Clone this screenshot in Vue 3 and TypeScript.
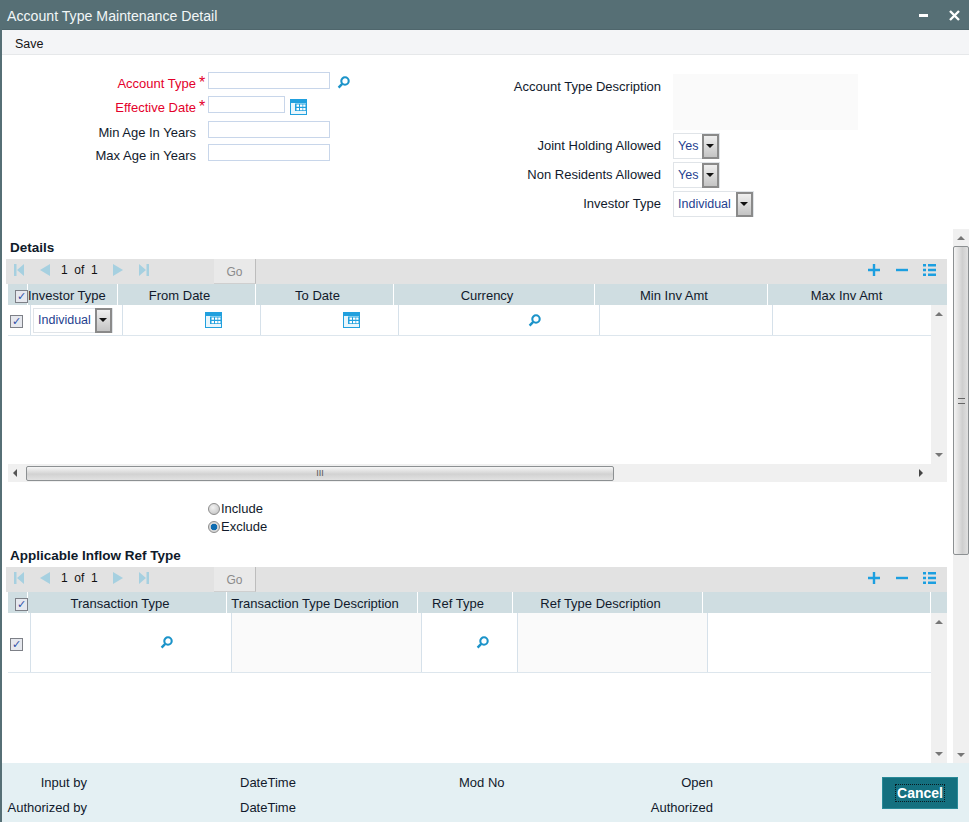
<script setup lang="ts">
interface Cell { w: number; bg?: boolean; icon?: 'cal' | 'search'; pad?: number; select?: boolean; check?: boolean }
interface Head { w: number; label: string; check?: boolean; left?: boolean; pr?: number }

const heads1: Head[] = [
  { w: 20, label: '', check: true },
  { w: 90, label: 'Investor Type', left: true },
  { w: 138, label: 'From Date' },
  { w: 138, label: 'To Date' },
  { w: 201, label: 'Currency' },
  { w: 173, label: 'Min Inv Amt' },
  { w: 180, label: 'Max Inv Amt', pr: 23 }
]
const cells1: Cell[] = [
  { w: 23, check: true },
  { w: 92, select: true },
  { w: 138, icon: 'cal', pad: 82 },
  { w: 138, icon: 'cal', pad: 82 },
  { w: 201, icon: 'search', pad: 129 },
  { w: 173 },
  { w: 158 }
]
const heads2: Head[] = [
  { w: 20, label: '', check: true },
  { w: 199, label: 'Transaction Type' },
  { w: 191, label: 'Transaction Type Description' },
  { w: 95, label: 'Ref Type' },
  { w: 190, label: 'Ref Type Description' },
  { w: 228, label: '' },
  { w: 17, label: '' }
]
const cells2: Cell[] = [
  { w: 23, check: true },
  { w: 201, icon: 'search', pad: 129 },
  { w: 190, bg: true },
  { w: 96, icon: 'search', pad: 54 },
  { w: 190, bg: true },
  { w: 223 }
]
const leftFields = [
  { label: 'Account Type', req: true, w: 122, icon: 'search' },
  { label: 'Effective Date', req: true, w: 77, icon: 'cal' },
  { label: 'Min Age In Years', req: false, w: 122, icon: '' },
  { label: 'Max Age in Years', req: false, w: 122, icon: '' }
]
const rightSelects = [
  { label: 'Joint Holding Allowed', value: 'Yes', w: 47 },
  { label: 'Non Residents Allowed', value: 'Yes', w: 47 },
  { label: 'Investor Type', value: 'Individual', w: 81 }
]
const grids = [
  { title: 'Details', heads: heads1, cells: cells1, rowH: 31, bodyH: 159, hscroll: true },
  { title: 'Applicable Inflow Ref Type', heads: heads2, cells: cells2, rowH: 60, bodyH: 150, hscroll: false }
]
</script>

<template>
  <div class="window">
    <svg class="defs" aria-hidden="true">
      <symbol id="i-search" viewBox="0 0 13 13">
        <circle cx="8" cy="5" r="3.7" fill="none" stroke="#1b93c9" stroke-width="2.100" />
        <path d="M5.200 7.900 1.600 11.600" fill="none" stroke="#1b93c9" stroke-width="2.400" />
      </symbol>
      <symbol id="i-cal" viewBox="0 0 17 16">
        <rect width="17" height="16" fill="#21a0de" />
        <path d="M1 4h15v11H1z" fill="#7fcbee" />
        <path d="M1 4h4v11H1z" fill="#e8f6fc" />
        <path d="M1 12h15v3H1z" fill="#e8f6fc" />
        <path d="M5 5h11v7H5z" fill="#21a0de" />
        <path d="M6.500 5.500h2.500v2.300H6.500zM10 5.500h2.500v2.300H10zM13.200 5.500h2.300v2.300h-2.300zM6.500 9h2.500v2.300H6.500zM10 9h2.500v2.300H10zM13.200 9h2.300v2.300h-2.300z" fill="#fff" />
      </symbol>
      <symbol id="i-first" viewBox="0 0 10 12"><path d="M0 0h2.500v12H0zM10 0v12L3 6z" fill="#a6d0e0" /></symbol>
      <symbol id="i-prev" viewBox="0 0 10 12"><path d="M10 0v12L0 6z" fill="#a6d0e0" /></symbol>
      <symbol id="i-next" viewBox="0 0 10 12"><path d="M0 0v12l10-6z" fill="#a6d0e0" /></symbol>
      <symbol id="i-last" viewBox="0 0 10 12"><path d="M7.500 0H10v12H7.500zM0 0v12l7-6z" fill="#a6d0e0" /></symbol>
      <symbol id="i-plus" viewBox="0 0 12 12"><path d="M4.800 0h2.400v4.800H12v2.400H7.200V12H4.800V7.200H0V4.800h4.800z" fill="#1c9fe0" /></symbol>
      <symbol id="i-minus" viewBox="0 0 12 12"><path d="M0 4.800h12v2.400H0z" fill="#1c9fe0" /></symbol>
      <symbol id="i-list" viewBox="0 0 13 12"><path d="M0 0h3v2.500H0zM5 0h8v2.500H5zM0 4.700h3v2.500H0zM5 4.700h8v2.500H5zM0 9.400h3v2.500H0zM5 9.400h8v2.500H5z" fill="#1c9fe0" /></symbol>
    </svg>

    <header class="titlebar">
      <span class="title">Account Type Maintenance Detail</span>
      <div class="win-actions">
        <span class="minimize"></span>
        <svg class="close" width="11" height="11" viewBox="0 0 11 11"><path d="M1 1l9 9M10 1l-9 9" stroke="#fff" stroke-width="2.400" /></svg>
      </div>
    </header>

    <nav class="menubar"><span class="save">Save</span></nav>

    <section class="form">
      <div class="left-form">
        <div v-for="f in leftFields" :key="f.label" class="field">
          <label class="flabel" :class="{ req: f.req }">{{ f.label }}</label>
          <span class="star">{{ f.req ? '*' : '' }}</span>
          <span class="input" :style="{ width: f.w + 'px' }"></span>
          <svg v-if="f.icon === 'search'" class="ic-search" width="13" height="13"><use href="#i-search" /></svg>
          <svg v-if="f.icon === 'cal'" class="ic-cal" width="17" height="16"><use href="#i-cal" /></svg>
        </div>
      </div>
      <div class="right-form">
        <div class="rfield desc">
          <label class="rlabel">Account Type Description</label>
          <span class="descbox"></span>
        </div>
        <div v-for="s in rightSelects" :key="s.label" class="rfield">
          <label class="rlabel">{{ s.label }}</label>
          <span class="select" :style="{ width: s.w + 'px' }">
            <span class="val">{{ s.value }}</span>
            <span class="arrow"></span>
          </span>
        </div>
      </div>
    </section>

    <div class="content">
      <main class="main">
        <template v-for="(g, gi) in grids" :key="g.title">
          <h2 class="heading">{{ g.title }}</h2>
          <div class="toolbar">
            <div class="pager">
              <svg width="10" height="12"><use href="#i-first" /></svg>
              <svg width="10" height="12"><use href="#i-prev" /></svg>
              <span class="pages">1&nbsp; of&nbsp; 1</span>
              <svg width="10" height="12"><use href="#i-next" /></svg>
              <svg width="10" height="12"><use href="#i-last" /></svg>
            </div>
            <span class="go">Go</span>
            <div class="tools">
              <svg width="12" height="12"><use href="#i-plus" /></svg>
              <svg width="12" height="12"><use href="#i-minus" /></svg>
              <svg width="13" height="12"><use href="#i-list" /></svg>
            </div>
          </div>
          <div class="thead">
            <div
              v-for="(h, i) in g.heads"
              :key="i"
              class="th"
              :class="{ left: h.left }"
              :style="{ width: h.w + 'px', paddingRight: h.pr ? h.pr + 'px' : undefined }"
            >
              <span v-if="h.check" class="check head-check">✓</span>
              <template v-else>{{ h.label }}</template>
            </div>
          </div>
          <div class="tbody" :style="{ height: g.bodyH + 'px' }">
            <div class="rows">
              <div class="tr" :style="{ height: g.rowH + 'px' }">
                <div
                  v-for="(c, i) in g.cells"
                  :key="i"
                  class="td"
                  :class="{ shaded: c.bg }"
                  :style="{ width: c.w + 'px', paddingLeft: (c.pad ?? 0) + 'px' }"
                >
                  <span v-if="c.check" class="check row-check">✓</span>
                  <span v-if="c.select" class="select cell-select">
                    <span class="val">Individual</span>
                    <span class="arrow"></span>
                  </span>
                  <svg v-if="c.icon === 'cal'" width="17" height="16"><use href="#i-cal" /></svg>
                  <svg v-if="c.icon === 'search'" width="13" height="13"><use href="#i-search" /></svg>
                </div>
              </div>
            </div>
            <div class="vscroll">
              <span class="tri up"></span>
              <span class="tri down"></span>
            </div>
          </div>
          <div v-if="g.hscroll" class="hscroll">
            <span class="tri left"></span>
            <span class="hthumb"><span class="grip">III</span></span>
            <span class="tri right"></span>
          </div>
          <div v-if="gi === 0" class="radios">
            <label class="radio"><span class="dot"></span>Include</label>
            <label class="radio"><span class="dot on"></span>Exclude</label>
          </div>
        </template>
      </main>
      <aside class="page-scroll">
        <span class="pbtn"><span class="tri up"></span></span>
        <span class="pthumb"><span class="pgrip"></span></span>
        <span class="pbtn"><span class="tri down"></span></span>
      </aside>
    </div>

    <footer class="footer">
      <div class="audit">
        <span class="a1">Input by</span><span class="a2">DateTime</span><span class="a3">Mod No</span><span class="a4">Open</span>
        <span class="a1">Authorized by</span><span class="a2">DateTime</span><span class="a3"></span><span class="a4">Authorized</span>
      </div>
      <button class="cancel" type="button"><span>Cancel</span></button>
    </footer>
  </div>
</template>

<style>
html, body { margin: 0; overflow: hidden; background: #fff; }
</style>

<style scoped>
.window {
  width: 969px;
  height: 822px;
  display: flex;
  flex-direction: column;
  box-sizing: border-box;
  border-left: 2px solid #566f75;
  font: 13px/16px "Liberation Sans", Arial, sans-serif;
  color: #111a2c;
  overflow: hidden;
  position: relative;
}
.defs { display: none; }
.titlebar {
  margin-left: -2px;
  height: 30px;
  flex: none;
  background: #566f75;
  border-bottom: 1px solid #4f666c;
  box-sizing: border-box;
  display: flex;
  align-items: center;
  justify-content: space-between;
  padding: 2px 9px 0 7px;
  color: #f1f6f7;
}
.title { font-size: 14.150px; }
.win-actions { display: flex; align-items: center; gap: 21px; }
.minimize { width: 9px; height: 3px; background: #fff; }
.close { display: block; }
.menubar {
  height: 25px;
  flex: none;
  background: #f4f5f7;
  border-bottom: 1px solid #e6e8ea;
  box-sizing: border-box;
  display: flex;
  align-items: center;
  padding: 3px 0 0 13px;
}
.save { color: #141414; font-size: 12.500px; }
.form { height: 174px; flex: none; display: flex; }
.left-form {
  width: 500px;
  padding-top: 17px;
  display: grid;
  grid-template-rows: 24px 25px 23px 23px;
  align-content: start;
}
.field { display: flex; align-items: flex-start; }
.flabel { width: 194px; text-align: right; line-height: 24px; }
.flabel.req { color: #e4002b; }
.star { width: 12px; color: #e4002b; font-size: 16px; line-height: 22px; padding-left: 3px; box-sizing: border-box; }
.input {
  height: 17px;
  box-sizing: border-box;
  border: 1px solid #c8d6ea;
  background: #fff;
  display: block;
}
.ic-search { margin: 4px 0 0 7px; }
.ic-cal { margin: 3px 0 0 5px; }
.right-form { flex: 1; padding-top: 19px; display: flex; flex-direction: column; }
.rfield { display: flex; align-items: flex-start; height: 29px; }
.rfield.desc { height: 59px; }
.rlabel { width: 159px; text-align: right; margin-right: 12px; line-height: 26px; }
.descbox { width: 185px; height: 56px; background: #fafafa; display: block; }
.select {
  height: 26px;
  box-sizing: border-box;
  border: 1px solid #e0e4e8;
  display: inline-flex;
  align-items: center;
  padding: 0 0 0 4px;
  background: #fff;
}
.val { color: #1f3f8f; font-size: 12.500px; }
.arrow {
  width: 17px;
  height: 25px;
  flex: none;
  box-sizing: border-box;
  border: 2px solid #8a8a8a;
  background: linear-gradient(#efefef, #c4c4c4);
  position: relative;
  margin: 0 0 0 auto;
}
.arrow::after {
  content: "";
  position: absolute;
  left: 2px;
  top: 8px;
  border: 4px solid transparent;
  border-top: 4px solid #111;
  border-bottom: 0;
}
.content { flex: 1; min-height: 0; display: flex; }
.main { width: 941px; margin-left: 4px; overflow: hidden; }
.heading { font-size: 13.500px; font-weight: 700; line-height: 16px; margin: 0; padding: 11px 0 3px 4px; color: #0f1a2a; }
.toolbar {
  height: 25px;
  background: #e2e2e2;
  display: flex;
  align-items: center;
  position: relative;
}
.pager { display: flex; align-items: center; width: 208px; padding: 0 0 3px 8px; box-sizing: border-box; gap: 16px; }
.pages { width: 36px; margin: 0 0 0 -5px; font-size: 12px; color: #111; white-space: nowrap; }
.go {
  width: 42px;
  height: 25px;
  box-sizing: border-box;
  background: #e9e9e9;
  border-right: 1px solid #bdbdbd;
  border-bottom: 1px solid #cfcfcf;
  color: #8b8b8b;
  font-size: 12px;
  line-height: 26px;
  text-align: center;
}
.tools { margin-left: auto; display: flex; align-items: center; gap: 16px; padding: 0 11px 3px 0; }
.tools svg:last-child { margin-left: -1px; }
.thead { height: 21px; display: flex; margin-left: 2px; background: #cfdde1; }
.th {
  flex: none;
  box-sizing: border-box;
  border-right: 1px solid #fff;
  padding-right: 14px;
  text-align: center;
  line-height: 23px;
  white-space: nowrap;
  position: relative;
}
.th.left { text-align: left; padding: 0; }
.th:last-child { border-right: 0; }
.tbody { display: flex; margin-left: 2px; }
.rows { width: 923px; flex: none; }
.tr { display: flex; border-bottom: 1px solid #dde6ed; box-sizing: border-box; }
.td {
  flex: none;
  box-sizing: border-box;
  border-right: 1px solid #d6e1ea;
  display: flex;
  align-items: center;
}
.td.shaded { background: #fafafa; }
.td:last-child { border-right: 0; }
.check {
  width: 13px;
  height: 13px;
  box-sizing: border-box;
  border: 1px solid #7d8087;
  background: #e6e8ee;
  color: #2f50a8;
  font: 700 11px/11px "DejaVu Sans", sans-serif;
  text-align: center;
  display: block;
  margin-left: 2px;
}
.row-check { margin-top: 3px; }
.head-check { position: absolute; left: 7px; top: 6px; margin: 0; }
.cell-select { width: 80px; height: 25px; margin-left: 2px; }
.vscroll {
  width: 16px;
  flex: none;
  background: #f0f0f0;
  display: flex;
  flex-direction: column;
  justify-content: space-between;
  align-items: center;
  padding: 7px 0;
  box-sizing: border-box;
}
.tri { width: 0; height: 0; display: block; border: 4px solid transparent; }
.tri.up { border-bottom: 4px solid #777; border-top: 0; }
.tri.down { border-top: 4px solid #777; border-bottom: 0; }
.tri.left { border-right: 4px solid #555; border-left: 0; }
.tri.right { border-left: 4px solid #444; border-right: 0; }
.hscroll {
  height: 18px;
  margin-left: 2px;
  background: #f0f0f0;
  display: flex;
  align-items: center;
  padding-left: 5px;
  box-sizing: border-box;
  position: relative;
}
.hthumb {
  width: 588px;
  height: 15px;
  margin-left: 9px;
  box-sizing: border-box;
  border: 1px solid #8c9092;
  border-radius: 2px;
  background: linear-gradient(#f6f6f6, #d2d2d2 55%, #e2e2e2);
  display: flex;
  align-items: center;
  justify-content: center;
}
.grip { font-size: 9px; line-height: 9px; color: #555; }
.hscroll .tri.right { margin-left: 305px; }
.radios { height: 37px; padding: 18px 0 0 202px; display: flex; flex-direction: column; }
.radio { height: 18px; display: flex; align-items: center; font-size: 13px; }
.dot {
  width: 12px;
  height: 12px;
  border-radius: 50%;
  box-sizing: border-box;
  border: 1px solid #8c8c8c;
  background: radial-gradient(circle at 40% 35%, #f2f2f2, #bdbdbd);
  margin-right: 1px;
}
.dot.on { background: radial-gradient(circle at 50% 50%, #0f6cb0 0 3px, #d8d8d8 3.600px); }
.page-scroll {
  width: 16px;
  margin-left: 6px;
  flex: none;
  background: #f0f0f0;
  display: flex;
  flex-direction: column;
  height: 534px;
}
.pbtn { height: 17px; flex: none; display: flex; align-items: center; justify-content: center; }
.pthumb {
  height: 309px;
  flex: none;
  box-sizing: border-box;
  border: 1px solid #8c9092;
  border-radius: 2px;
  background: linear-gradient(90deg, #f4f4f4, #cfcfcf 60%, #e0e0e0);
  display: flex;
  align-items: center;
  justify-content: center;
}
.pgrip { width: 7px; height: 6px; border-top: 1px solid #666; border-bottom: 1px solid #666; position: relative; box-sizing: border-box; }
.page-scroll .pbtn:last-child { margin-top: auto; }
.footer {
  margin-left: -2px;
  height: 59px;
  flex: none;
  background: #e4f0f3;
  position: relative;
  display: flex;
  align-items: center;
  justify-content: space-between;
  padding-right: 11px;
  z-index: 1;
}
.audit {
  display: grid;
  grid-template-columns: 87px 153px 219px 254px;
  grid-auto-rows: 25px;
  align-items: center;
  margin-top: 5px;
}
.a1 { text-align: right; }
.a2 { padding-left: 153px; width: 0; white-space: nowrap; }
.a3 { width: 0; padding-left: 219px; white-space: nowrap; }
.a4 { text-align: right; }
.cancel {
  width: 76px;
  height: 32px;
  background: #14707f;
  border: 1px solid #2a8a98;
  color: #fff;
  font: 700 14px "Liberation Sans", Arial, sans-serif;
  padding: 0;
  display: flex;
  align-items: center;
  justify-content: center;
}
.cancel span { outline: 1px dotted #0a1a20; padding: 0 1px; line-height: 16px; }
</style>
